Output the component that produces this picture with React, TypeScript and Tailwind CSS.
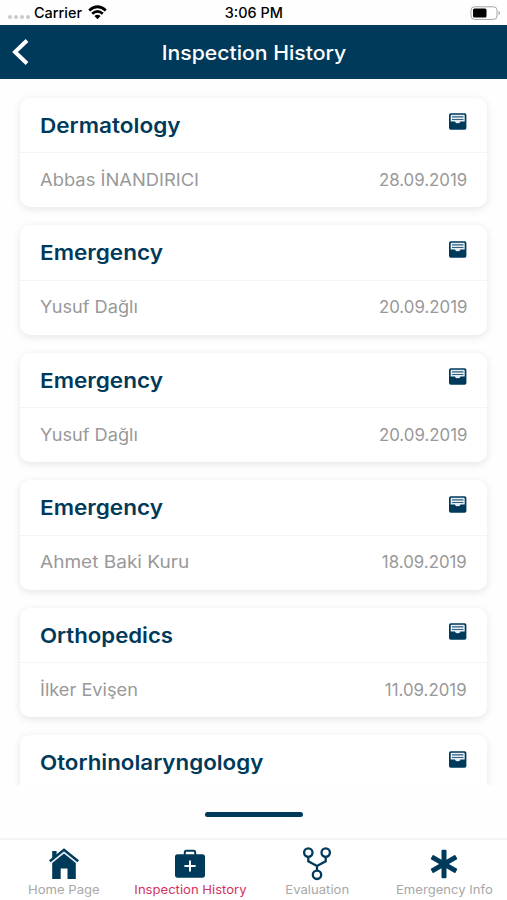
interface Inspection {
  department: string;
  doctor: string;
  date: string;
  titleWidth: string;
  nameWidth: string;
}

const inspections: Inspection[] = [
  { department: "Dermatology", doctor: "Abbas İNANDIRICI", date: "28.09.2019", titleWidth: "scale-x-[1.1]", nameWidth: "scale-x-[1.08]" },
  { department: "Emergency", doctor: "Yusuf Dağlı", date: "20.09.2019", titleWidth: "scale-x-[1.1]", nameWidth: "scale-x-[1.07]" },
  { department: "Emergency", doctor: "Yusuf Dağlı", date: "20.09.2019", titleWidth: "scale-x-[1.1]", nameWidth: "scale-x-[1.07]" },
  { department: "Emergency", doctor: "Ahmet Baki Kuru", date: "18.09.2019", titleWidth: "scale-x-[1.1]", nameWidth: "scale-x-[1.12]" },
  { department: "Orthopedics", doctor: "İlker Evişen", date: "11.09.2019", titleWidth: "scale-x-[1.083]", nameWidth: "scale-x-[1.07]" },
  { department: "Otorhinolaryngology", doctor: "", date: "", titleWidth: "scale-x-[1.09]", nameWidth: "" },
];

const FiledIcon = () => (
  <svg className="h-[17px] w-[18px]" viewBox="0 0 18 17">
    <rect x="0" y="0.2" width="17.4" height="16.6" rx="1.8" fill="#003a5b" />
    <path d="M1.7 2.6 Q1.7 1.8 2.5 1.8 H14.9 Q15.7 1.8 15.7 2.6 V8.4 H11.5 Q10.9 10.3 8.7 10.3 Q6.5 10.3 5.9 8.4 H1.7Z" fill="#e3edf3" />
    <path d="M3 3.9 H14.4 M3 6.5 H14.4" stroke="#35617c" strokeWidth="1.2" />
  </svg>
);

const HomeIcon = () => (
  <svg className="ml-[2px] h-8 w-8" viewBox="0 0 32 32" fill="#003a5b">
    <path d="M4.2 3 H8.6 V7 L4.2 10.6Z" />
    <path d="M4.2 15 L16 5.4 L27.8 15 V31 H19.5 V20.6 H12.7 V31 H4.2Z" />
    <path d="M2.8 14.6 L16 4.1 L29.2 14.6" fill="none" stroke="#d5e4ee" strokeWidth="1.1" />
    <path d="M1.8 13.2 L16 1.9 L30.2 13.2" fill="none" stroke="#003a5b" strokeWidth="2.4" />
  </svg>
);

const MedkitIcon = () => (
  <svg className="h-8 w-8" viewBox="0 0 32 32">
    <path d="M10.8 7 V4.2 Q10.8 2.7 12.3 2.7 H19.7 Q21.2 2.7 21.2 4.2 V7" fill="none" stroke="#003a5b" strokeWidth="2" />
    <rect x="1" y="6.2" width="30" height="23.5" rx="2.6" fill="#003a5b" />
    <path d="M16 12.4 V23.6 M10.4 18 H21.6" stroke="#fff" strokeWidth="2" />
  </svg>
);

const ForkIcon = () => (
  <svg className="h-8 w-8 overflow-visible" viewBox="0 0 32 32" fill="none" stroke="#003a5b" strokeWidth="2.3">
    <circle cx="7.3" cy="4.6" r="4.2" />
    <circle cx="24.7" cy="4.6" r="4.2" />
    <circle cx="16" cy="26.8" r="4.2" />
    <path d="M7.3 8.8 V13.3 L16 18 L24.7 13.3 V8.8 M16 18 V22.6" />
  </svg>
);

const AsteriskIcon = () => (
  <svg className="h-8 w-8" viewBox="0 0 32 32" fill="#003a5b">
    <rect x="13.5" y="1.8" width="5" height="28.4" rx="1" />
    <rect x="13.5" y="1.8" width="5" height="28.4" rx="1" transform="rotate(60 16 16)" />
    <rect x="13.5" y="1.8" width="5" height="28.4" rx="1" transform="rotate(120 16 16)" />
  </svg>
);

const InspectionCard = ({ department, doctor, date, titleWidth, nameWidth }: Inspection) => {
  return (
    <div className="h-[109.5px] shrink-0 rounded-[10px] bg-white shadow-[0_2px_8px_rgba(0,0,0,0.1)]">
      <div className="flex h-[55.5px] items-center justify-between border-b border-[#f4f4f4] px-5">
        <div className={`mt-[2px] origin-left text-[20.5px] font-semibold leading-6 text-[#003a5b] ${titleWidth}`}>{department}</div>
        <div className="mb-[6px]">
          <FiledIcon />
        </div>
      </div>
      <div className="flex h-[54px] items-center justify-between px-5 pt-px text-[17px] text-[#999]">
        <div className={`origin-left ${nameWidth}`}>{doctor}</div>
        <div className="origin-right scale-x-[0.99]">{date}</div>
      </div>
    </div>
  );
};

const tabs = [
  { label: "Home Page", icon: <HomeIcon />, active: false },
  { label: "Inspection History", icon: <MedkitIcon />, active: true },
  { label: "Evaluation", icon: <ForkIcon />, active: false },
  { label: "Emergency Info", icon: <AsteriskIcon />, active: false },
];

const StatusBar = () => (
  <div className="grid h-[25px] grid-cols-3 items-center px-2 text-[14px] font-medium text-black">
    <div className="flex items-center">
      <div className="mt-[9px] flex gap-[2px]">
        {[0, 1, 2, 3].map((dot) => (
          <span key={dot} className="h-[4px] w-[4px] rounded-full bg-[#c9c9c9]" />
        ))}
      </div>
      <span className="ml-1 origin-left scale-x-[1.03]">Carrier</span>
      <svg className="ml-[7px] h-[15px] w-[19px]" viewBox="0 0 19 15" fill="none" stroke="#000" strokeWidth="2.8">
        <path d="M1.2 5.5 Q9.5 -2 17.8 5.5 M4.2 8.8 Q9.5 4 14.8 8.8" />
        <path d="M6.4 11 Q9.5 8.4 12.6 11 L9.5 14.3Z" fill="#000" stroke="none" />
      </svg>
    </div>
    <div className="scale-x-[1.03] text-center">3:06 PM</div>
    <svg className="-mr-[2px] h-[14px] w-[31px] justify-self-end" viewBox="0 0 31 14">
      <rect x="1" y="0.8" width="26" height="12.6" rx="3.5" fill="#fff" stroke="#a5a5a5" />
      <rect x="3" y="2.6" width="13.5" height="9" rx="1.5" fill="#000" />
      <path d="M28.5 5 Q30 5.8 30 7 Q30 8.3 28.5 9Z" fill="#a5a5a5" />
    </svg>
  </div>
);

const App = () => {
  return (
    <div className="flex h-[900px] w-[507px] flex-col overflow-hidden bg-[#fefefe] font-['Inter',sans-serif]">
      <StatusBar />
      <header className="grid h-[54px] shrink-0 grid-cols-[60px_1fr_60px] items-center bg-[#003a5b]">
        <svg className="ml-3 h-[28px] w-[18px]" viewBox="0 0 18 28" fill="none" stroke="#fff" strokeWidth="4">
          <path d="M15 2.5 L3 14 L15 25.5" />
        </svg>
        <h1 className="ml-px mt-[2px] scale-x-[1.06] text-center text-[20px] font-medium text-white">Inspection History</h1>
      </header>
      <main className="flex h-[706px] shrink-0 flex-col gap-[18px] overflow-hidden px-5 pt-[18.5px]">
        {inspections.map((item, index) => (
          <InspectionCard key={index} {...item} />
        ))}
      </main>
      <div className="flex h-[53px] shrink-0 items-center justify-center pt-[5px]">
        <div className="h-[5px] w-[98px] rounded-full bg-[#003a5b]" />
      </div>
      <nav className="grid grow grid-cols-4 border-t-2 border-[#f4f4f4] bg-white">
        {tabs.map((tab) => (
          <div key={tab.label} className="flex flex-col items-center pt-[7.5px]">
            {tab.icon}
            <span className={`ml-px mt-[2.5px] scale-x-[1.09] whitespace-nowrap text-[12px] leading-4 ${tab.active ? "text-[#d4315f]" : "text-[#a8a8a8]"}`}>
              {tab.label}
            </span>
          </div>
        ))}
      </nav>
    </div>
  );
};

export default App;
